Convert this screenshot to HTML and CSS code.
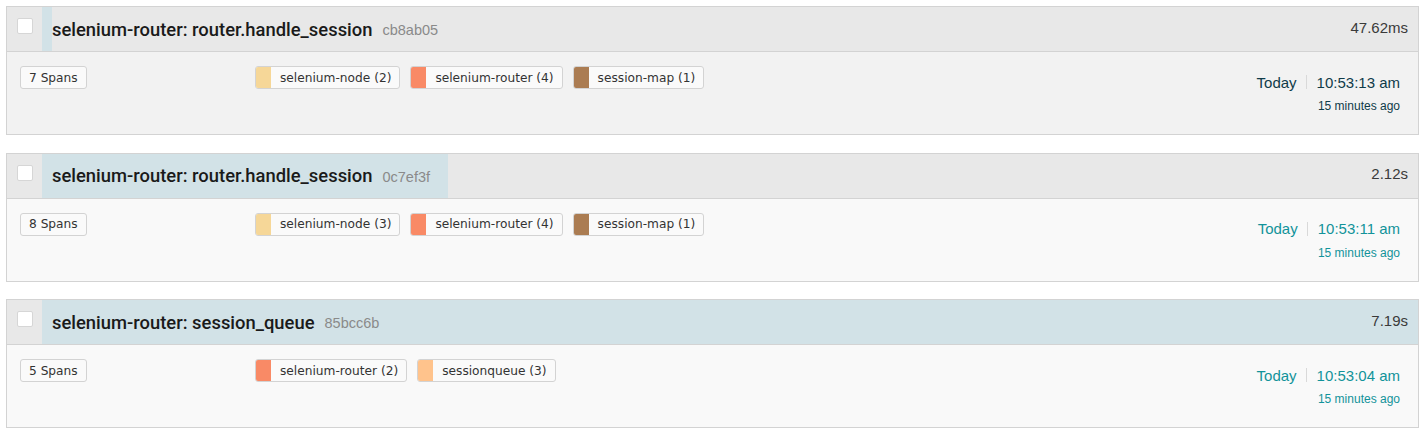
FILE: index.html
```html
<!DOCTYPE html>
<html>
<head>
<meta charset="utf-8">
<link rel="stylesheet" href="styles.css">
</head>
<body>
<div class="list">
  <div class="card card-hover">
    <div class="head">
      <div class="check-cell"><span class="checkbox"></span></div>
      <div class="title-area" style="--w: 10px">
        <span class="title">selenium-router: router.handle_session</span>
        <span class="trace-id">cb8ab05</span>
        <span class="duration">47.62ms</span>
      </div>
    </div>
    <div class="body">
      <div class="col-spans"><span class="tag">7 Spans</span></div>
      <div class="col-services">
        <span class="svc"><i class="swatch c-node"></i><span class="svc-label">selenium-node (2)</span></span>
        <span class="svc"><i class="swatch c-router"></i><span class="svc-label">selenium-router (4)</span></span>
        <span class="svc"><i class="swatch c-map"></i><span class="svc-label">session-map (1)</span></span>
      </div>
      <div class="col-time">
        <div class="time-line"><span>Today</span><span class="sep"></span><span>10:53:13 am</span></div>
        <div class="ago">15 minutes ago</div>
      </div>
    </div>
  </div>

  <div class="card">
    <div class="head">
      <div class="check-cell"><span class="checkbox"></span></div>
      <div class="title-area" style="--w: 29.5%">
        <span class="title">selenium-router: router.handle_session</span>
        <span class="trace-id">0c7ef3f</span>
        <span class="duration">2.12s</span>
      </div>
    </div>
    <div class="body">
      <div class="col-spans"><span class="tag">8 Spans</span></div>
      <div class="col-services">
        <span class="svc"><i class="swatch c-node"></i><span class="svc-label">selenium-node (3)</span></span>
        <span class="svc"><i class="swatch c-router"></i><span class="svc-label">selenium-router (4)</span></span>
        <span class="svc"><i class="swatch c-map"></i><span class="svc-label">session-map (1)</span></span>
      </div>
      <div class="col-time">
        <div class="time-line"><span>Today</span><span class="sep"></span><span>10:53:11 am</span></div>
        <div class="ago">15 minutes ago</div>
      </div>
    </div>
  </div>

  <div class="card">
    <div class="head">
      <div class="check-cell"><span class="checkbox"></span></div>
      <div class="title-area" style="--w: 100%">
        <span class="title">selenium-router: session_queue</span>
        <span class="trace-id">85bcc6b</span>
        <span class="duration">7.19s</span>
      </div>
    </div>
    <div class="body">
      <div class="col-spans"><span class="tag">5 Spans</span></div>
      <div class="col-services">
        <span class="svc"><i class="swatch c-router"></i><span class="svc-label">selenium-router (2)</span></span>
        <span class="svc"><i class="swatch c-queue"></i><span class="svc-label">sessionqueue (3)</span></span>
      </div>
      <div class="col-time">
        <div class="time-line"><span>Today</span><span class="sep"></span><span>10:53:04 am</span></div>
        <div class="ago">15 minutes ago</div>
      </div>
    </div>
  </div>
</div>
</body>
</html>
```

FILE: styles.css
```css
* { box-sizing: border-box; }
html, body { margin: 0; padding: 0; background: #fff; }
body {
  font-family: "Liberation Sans", Arial, sans-serif;
  color: #222;
}
.list {
  padding: 6px 6px 0 6px;
  display: flex;
  flex-direction: column;
  gap: 17.5px;
}
.card {
  border: 1px solid #d3d3d3;
  background: #f9f9f9;
  height: 129px;
  display: flex;
  flex-direction: column;
}
.card-hover { background: #f2f2f2; }

.head {
  height: 45px;
  flex: none;
  display: flex;
  background: #e8e8e8;
  border-bottom: 1px solid #d3d3d3;
}
.check-cell {
  width: 35px;
  flex: none;
  padding: 11px 0 0 10px;
}
.checkbox {
  display: block;
  width: 16px;
  height: 16px;
  background: #fff;
  border: 1px solid #d6d6d6;
  border-radius: 2px;
}
.title-area {
  flex: 1;
  display: flex;
  align-items: center;
  padding: 0 10px 0 10px;
  background: linear-gradient(to right, #d2e2e7 var(--w), transparent var(--w));
}
.title {
  font-family: Roboto, "Liberation Sans", sans-serif;
  font-weight: 500;
  font-size: 18.4px;
  color: #1a1a1a;
}
.trace-id {
  margin-left: 10px;
  font-size: 14.5px;
  color: #8a8a8a;
  padding-top: 2px;
}
.duration {
  margin-left: auto;
  font-size: 15px;
  color: #3a3a3a;
  padding-bottom: 4px;
}

.body {
  flex: 1;
  display: grid;
  grid-template-columns: 235px 1fr auto;
  padding: 14px 18px 0 13px;
  align-items: start;
}
.tag, .svc {
  display: inline-flex;
  align-items: center;
  height: 23px;
  border: 1px solid #d3d3d3;
  border-radius: 3px;
  background: #fafafa;
  font-family: "DejaVu Sans", Verdana, sans-serif;
  font-size: 12.2px;
  color: #333;
}
.tag { padding: 0 8px; }
.col-services { display: flex; gap: 10px; }
.svc { overflow: hidden; padding-right: 8px; }
.swatch {
  display: block;
  width: 16px;
  align-self: stretch;
  margin: -1px 0 -1px -1px;
  border-radius: 3px 0 0 3px;
}
.svc-label { padding-left: 9px; }
.c-node { background: #f6d798; }
.c-router { background: #f98a66; }
.c-map { background: #ab7c52; }
.c-queue { background: #ffc38c; }

.col-time {
  margin-top: 4px;
  color: #12939a;
  text-align: right;
}
.card-hover .col-time { color: #0f3b49; }
.time-line {
  display: flex;
  align-items: center;
  justify-content: flex-end;
  height: 24px;
  font-size: 15px;
}
.sep {
  display: block;
  width: 1px;
  height: 14px;
  background: #d9d9d9;
  margin: 0 10px 0 9px;
}
.ago {
  height: 24px;
  line-height: 24px;
  font-size: 12px;
}
```
